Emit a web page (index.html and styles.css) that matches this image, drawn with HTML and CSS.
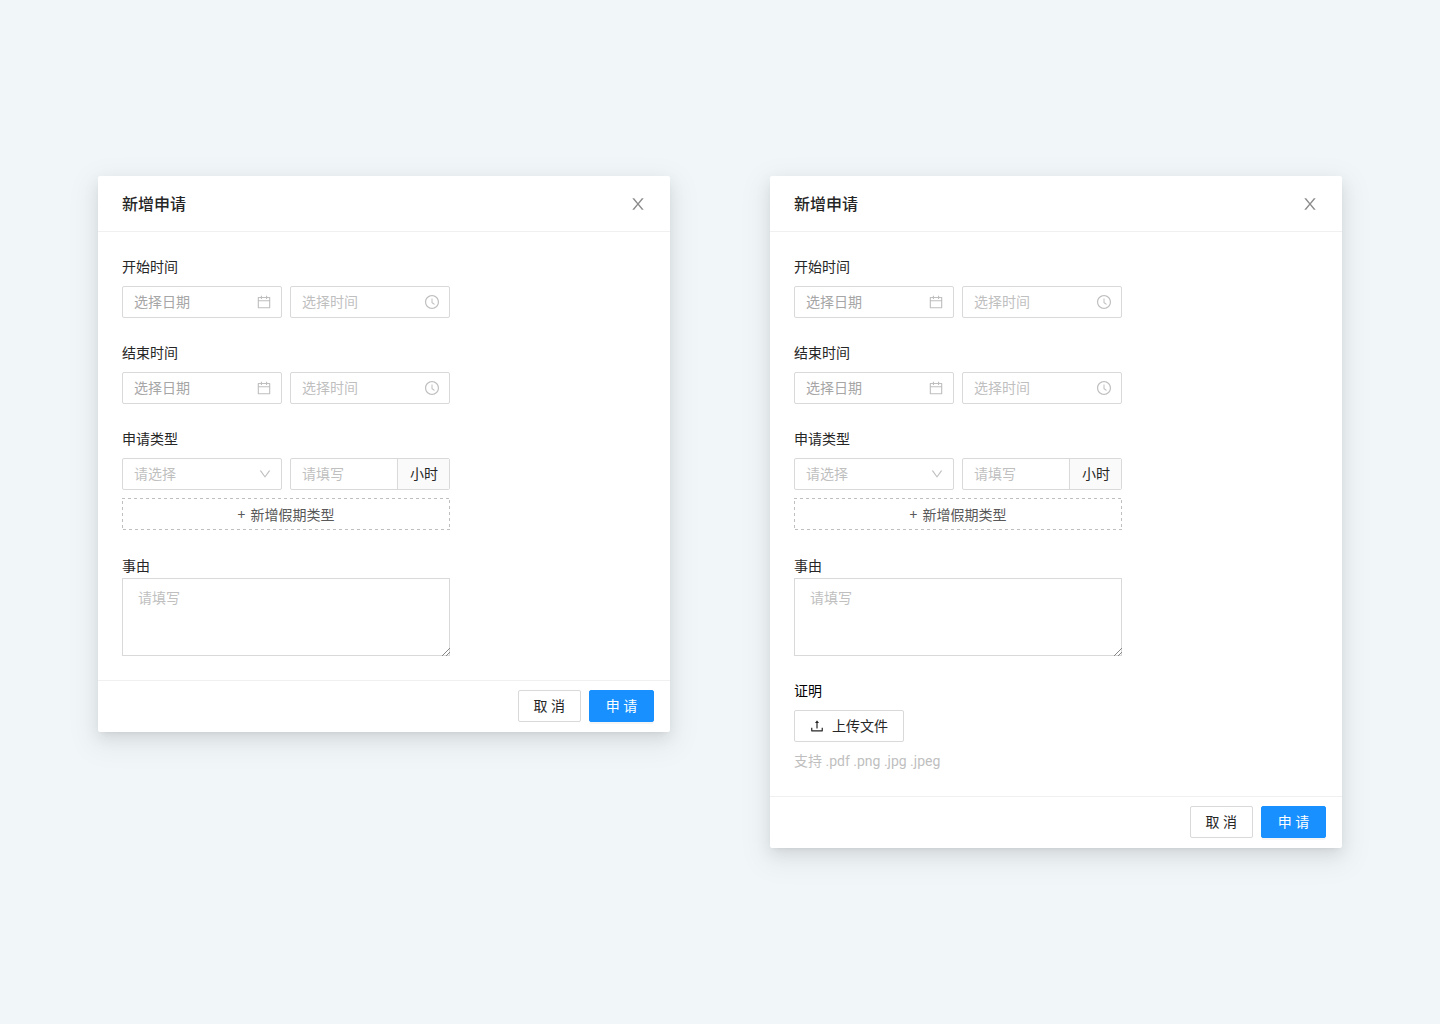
FILE: index.html
```html
<!DOCTYPE html>
<html lang="zh-CN">
<head>
<meta charset="utf-8">
<meta name="viewport" content="width=device-width, initial-scale=1">
<title>新增申请</title>
<link rel="stylesheet" href="styles.css">
</head>
<body>
<svg class="sprite" aria-hidden="true">
  <symbol id="calendar" viewBox="0 0 1024 1024"><path d="M880 184H712v-64c0-4.400-3.600-8-8-8h-56c-4.400 0-8 3.600-8 8v64H384v-64c0-4.400-3.600-8-8-8h-56c-4.400 0-8 3.600-8 8v64H144c-17.700 0-32 14.300-32 32v664c0 17.700 14.300 32 32 32h736c17.700 0 32-14.300 32-32V216c0-17.700-14.300-32-32-32zm-40 656H184V460h656v380zM184 392V256h128v48c0 4.400 3.600 8 8 8h56c4.400 0 8-3.600 8-8v-48h256v48c0 4.400 3.600 8 8 8h56c4.400 0 8-3.600 8-8v-48h128v136H184z"/></symbol>
  <symbol id="clock" viewBox="0 0 1024 1024"><path d="M512 64C264.600 64 64 264.600 64 512s200.600 448 448 448 448-200.600 448-448S759.400 64 512 64zm0 820c-205.400 0-372-166.600-372-372s166.600-372 372-372 372 166.600 372 372-166.600 372-372 372z"/><path d="M686.700 638.600L544.100 535.500V288c0-4.400-3.600-8-8-8H488c-4.400 0-8 3.600-8 8v275.400c0 2.600 1.200 5 3.300 6.500l165.400 120.600c3.600 2.600 8.600 1.800 11.200-1.700l28.600-39c2.600-3.700 1.800-8.700-1.800-11.200z"/></symbol>
  <symbol id="down" viewBox="0 0 1024 1024"><path d="M884 256h-75c-5.100 0-9.900 2.500-12.900 6.600L512 654.200 227.900 262.600c-3-4.100-7.800-6.600-12.900-6.600h-75c-6.500 0-10.300 7.400-6.500 12.700l352.600 486.100c12.800 17.600 39 17.600 51.700 0l352.600-486.100c3.900-5.300.1-12.700-6.400-12.700z"/></symbol>
  <symbol id="close" viewBox="0 0 1024 1024"><path d="M563.800 512l262.500-312.900c4.400-5.200.7-13.100-6.100-13.100h-79.800c-4.700 0-9.200 2.100-12.300 5.700L511.600 449.800 295.100 191.700c-3-3.600-7.500-5.700-12.300-5.700H203c-6.800 0-10.500 7.900-6.100 13.100L459.400 512 196.900 824.900A7.950 7.950 0 0 0 203 838h79.800c4.700 0 9.200-2.100 12.300-5.700l216.500-258.100 216.500 258.100c3 3.600 7.500 5.700 12.300 5.700h79.800c6.800 0 10.500-7.900 6.100-13.100L563.800 512z"/></symbol>
  <symbol id="upload" viewBox="0 0 1024 1024"><path d="M400 317.700h73.900V656c0 4.400 3.600 8 8 8h60c4.400 0 8-3.600 8-8V317.700H624c6.700 0 10.400-7.700 6.300-12.900L518.300 163a8 8 0 0 0-12.600 0l-112 141.700c-4.100 5.300-.4 13 6.300 13zM878 626h-60c-4.400 0-8 3.600-8 8v154H214V634c0-4.400-3.600-8-8-8h-60c-4.400 0-8 3.600-8 8v198c0 17.700 14.300 32 32 32h684c17.700 0 32-14.300 32-32V634c0-4.400-3.600-8-8-8z"/></symbol>
  <symbol id="grip" viewBox="0 0 9 9"><path d="M1 9L9 1M5 9L9 5" fill="none" stroke="#888"/></symbol>
</svg>
<main class="page">
  <form class="modal">
    <header class="modal-header">
      <h2 class="modal-title">新增申请</h2>
      <button class="close" type="button" aria-label="关闭"><svg class="icon-lg"><use href="#close"/></svg></button>
    </header>
    <div class="modal-body">
      <fieldset class="group">
        <legend class="label">开始时间</legend>
        <div class="row">
          <div class="control"><input class="input date" type="text" placeholder="选择日期" aria-label="开始日期"><svg class="icon"><use href="#calendar"/></svg></div>
          <div class="control"><input class="input" type="text" placeholder="选择时间" aria-label="开始时间"><svg class="icon"><use href="#clock"/></svg></div>
        </div>
      </fieldset>
      <fieldset class="group">
        <legend class="label">结束时间</legend>
        <div class="row">
          <div class="control"><input class="input date" type="text" placeholder="选择日期" aria-label="结束日期"><svg class="icon"><use href="#calendar"/></svg></div>
          <div class="control"><input class="input" type="text" placeholder="选择时间" aria-label="结束时间"><svg class="icon"><use href="#clock"/></svg></div>
        </div>
      </fieldset>
      <fieldset class="group">
        <legend class="label">申请类型</legend>
        <div class="row">
          <div class="control"><select class="input select" aria-label="申请类型"><option>请选择</option></select><svg class="icon-sm"><use href="#down"/></svg></div>
          <div class="control"><input class="input" type="text" placeholder="请填写" aria-label="时长"><span class="addon">小时</span></div>
        </div>
        <button class="add" type="button"><svg class="dash" aria-hidden="true"><rect x="0" y="0" width="100%" height="100%"/></svg><span>+</span><span>新增假期类型</span></button>
      </fieldset>
      <div class="group">
        <label class="label reason-label" for="reason-1">事由</label>
        <div class="area"><textarea class="textarea" id="reason-1" placeholder="请填写"></textarea><svg class="grip"><use href="#grip"/></svg></div>
      </div>
    </div>
    <footer class="modal-footer">
      <button class="btn" type="button">取 消</button>
      <button class="btn primary" type="submit">申 请</button>
    </footer>
  </form>

  <form class="modal">
    <header class="modal-header">
      <h2 class="modal-title">新增申请</h2>
      <button class="close" type="button" aria-label="关闭"><svg class="icon-lg"><use href="#close"/></svg></button>
    </header>
    <div class="modal-body">
      <fieldset class="group">
        <legend class="label">开始时间</legend>
        <div class="row">
          <div class="control"><input class="input date" type="text" placeholder="选择日期" aria-label="开始日期"><svg class="icon"><use href="#calendar"/></svg></div>
          <div class="control"><input class="input" type="text" placeholder="选择时间" aria-label="开始时间"><svg class="icon"><use href="#clock"/></svg></div>
        </div>
      </fieldset>
      <fieldset class="group">
        <legend class="label">结束时间</legend>
        <div class="row">
          <div class="control"><input class="input date" type="text" placeholder="选择日期" aria-label="结束日期"><svg class="icon"><use href="#calendar"/></svg></div>
          <div class="control"><input class="input" type="text" placeholder="选择时间" aria-label="结束时间"><svg class="icon"><use href="#clock"/></svg></div>
        </div>
      </fieldset>
      <fieldset class="group">
        <legend class="label">申请类型</legend>
        <div class="row">
          <div class="control"><select class="input select" aria-label="申请类型"><option>请选择</option></select><svg class="icon-sm"><use href="#down"/></svg></div>
          <div class="control"><input class="input" type="text" placeholder="请填写" aria-label="时长"><span class="addon">小时</span></div>
        </div>
        <button class="add" type="button"><svg class="dash" aria-hidden="true"><rect x="0" y="0" width="100%" height="100%"/></svg><span>+</span><span>新增假期类型</span></button>
      </fieldset>
      <div class="group">
        <label class="label reason-label" for="reason-2">事由</label>
        <div class="area"><textarea class="textarea" id="reason-2" placeholder="请填写"></textarea><svg class="grip"><use href="#grip"/></svg></div>
      </div>
      <fieldset class="group">
        <legend class="label proof">证明</legend>
        <button class="btn upload" type="button"><svg class="icon"><use href="#upload"/></svg>上传文件</button>
        <p class="hint">支持 .pdf .png .jpg .jpeg</p>
      </fieldset>
    </div>
    <footer class="modal-footer">
      <button class="btn" type="button">取 消</button>
      <button class="btn primary" type="submit">申 请</button>
    </footer>
  </form>
</main>
</body>
</html>
```
FILE: styles.css
```css
* { box-sizing: border-box; }

body {
  margin: 0;
  background: #f1f6f9;
  color: #262626;
  font: 14px/22px Roboto, "Noto Sans CJK SC", sans-serif;
}

button, input, select, textarea { font: inherit; color: inherit; margin: 0; }
button { cursor: pointer; }
svg { fill: currentColor; flex: none; }
.sprite { position: absolute; width: 0; height: 0; }

.page {
  display: grid;
  grid-template-columns: repeat(auto-fit, minmax(420px, 1fr));
  align-items: start;
  gap: 100px;
  padding: 176px 98px;
}

.modal {
  background: #fff;
  border-radius: 2px;
  box-shadow: 0 9px 28px 8px rgba(0, 0, 0, .05), 0 6px 16px rgba(0, 0, 0, .08), 0 3px 6px -4px rgba(0, 0, 0, .12);
}

.modal-header {
  display: flex;
  align-items: center;
  justify-content: space-between;
  padding: 15px 23px 14px 24px;
  border-bottom: 1px solid #f0f0f0;
}
.modal-title { margin: 0; padding-top: 2px; font-size: 16px; line-height: 24px; font-weight: 500; }
.close { display: flex; padding: 0; border: 0; background: none; color: #8c8c8c; }

.icon { width: 16px; height: 16px; }
.icon-sm { width: 14px; height: 14px; }
.icon-lg { width: 18px; height: 18px; }

.modal-body { display: flex; flex-direction: column; gap: 24px; padding: 24px; }
.group { width: 100%; max-width: 328px; min-width: 0; margin: 0; padding: 0; border: 0; }
.label { display: block; margin-bottom: 8px; padding: 0; }
.reason-label { line-height: 24px; margin: 0; }
.proof { color: #000; }

.row { display: grid; grid-template-columns: 1fr 1fr; gap: 8px; }
.control {
  display: flex;
  align-items: center;
  height: 32px;
  padding-right: 9px;
  border: 1px solid #d9d9d9;
  border-radius: 2px;
  color: #bfbfbf;
}
.control:has(.addon) { padding-right: 0; }
.input {
  flex: 1;
  width: 0;
  height: 100%;
  padding: 0 0 0 11px;
  border: 0;
  outline: 0;
  background: none;
  color: #262626;
}
.input::placeholder, .textarea::placeholder { color: #bfbfbf; opacity: 1; }
.date::placeholder { color: #a6a6a6; }
.select { appearance: none; color: #bfbfbf; }
.addon {
  align-self: stretch;
  padding: 4px 11px 4px 12px;
  border-left: 1px solid #d9d9d9;
  background: #fafafa;
  color: #262626;
}

.add {
  position: relative;
  display: flex;
  align-items: center;
  justify-content: center;
  gap: 5px;
  width: 100%;
  height: 32px;
  margin-top: 8px;
  padding: 0;
  border: 0;
  background: none;
  color: #595959;
  font-family: "Noto Sans CJK SC", sans-serif;
}
.dash {
  position: absolute;
  inset: 0;
  width: 100%;
  height: 100%;
  fill: none;
  stroke: #bfbfbf;
  stroke-width: 2px;
  stroke-dasharray: 3px 3px;
}

.area { position: relative; }
.textarea {
  display: block;
  width: 100%;
  height: 78px;
  padding: 8px 15px;
  border: 1px solid #d9d9d9;
  border-radius: 0;
  outline: 0;
  background: #fff;
  resize: none;
}
.grip { position: absolute; right: 0; bottom: 0; width: 9px; height: 9px; }

.btn {
  height: 32px;
  padding: 0 15px;
  border: 1px solid #d9d9d9;
  border-radius: 2px;
  background: #fff;
}
.primary {
  min-width: 65px;
  border-color: #1890ff;
  background: #1890ff;
  color: #fff;
  box-shadow: 0 2px 0 rgba(0, 0, 0, .04);
}
.upload { display: flex; align-items: center; gap: 7px; padding-left: 14px; }
.hint { margin: 8px 0 0; color: #bfbfbf; }

.modal-footer {
  display: flex;
  justify-content: flex-end;
  gap: 8px;
  padding: 9px 16px 10px;
  border-top: 1px solid #f0f0f0;
}
```
